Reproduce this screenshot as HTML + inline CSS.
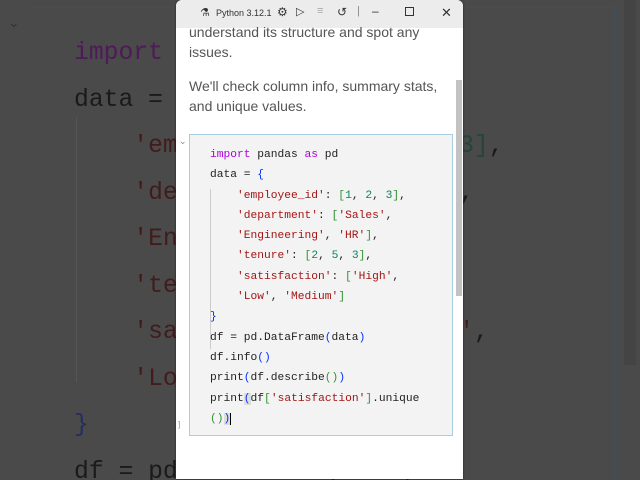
<!DOCTYPE html>
<html style="width:640px;height:480px;overflow:hidden"><head><meta charset="utf-8"><style>
*{margin:0;padding:0;box-sizing:border-box}
body{width:640px;height:480px;overflow:hidden;background:#4a4a4a;position:relative;font-family:"Liberation Sans",sans-serif}
.bg{position:absolute;left:29px;top:7px;width:586px;height:473px;border:1px solid #3f4f5c;border-bottom:none}
.bgc{position:absolute;left:74px;top:30px;font-family:"Liberation Mono",monospace;font-size:24.7px;line-height:46.5px;color:#1a1a1a;white-space:pre}
.bgsb{position:absolute;left:624px;top:0;width:12px;height:365px;background:#444}
.k{color:#af00db}.s{color:#a31515}.n{color:#098658}.b{color:#0431fa}.g{color:#319331}
.bgc span.dk{color:#4e1a57}.bgc span.ds{color:#421c1c}.bgc span.dn{color:#27443a}.bgc span.db{color:#222d63}
.win{position:absolute;left:176px;top:0;width:287px;height:479px;background:#fff;border-radius:6px 6px 0 0;overflow:hidden;box-shadow:0 0 2px #222}
.tb{height:28px;background:#ececec;position:relative;font-size:9px;color:#333}
.tb span{position:absolute;top:8px}
.txt{position:absolute;left:13px;font-size:14px;line-height:19.5px;color:#555}
.sb{position:absolute;left:280px;top:80px;width:6px;height:216px;background:#c2c2c2}
.code{position:absolute;left:13px;top:134px;width:264px;height:302px;background:#f3f3f3;border:1px solid #a9cce3}
.cl{position:absolute;left:20px;top:10px;font-family:"Liberation Mono",monospace;font-size:11.25px;line-height:20.3px;color:#222;white-space:pre}
.guide{position:absolute;left:20px;top:54px;width:1px;height:160px;background:#ccc}
</style></head><body>
<div class="bg"></div>
<div style="position:absolute;left:8px;top:14px;color:#333;font-size:14px">&#x2304;</div>
<div style="position:absolute;left:76px;top:117px;width:1px;height:265px;background:#555"></div>
<div class="bgc"><span class="dk">import</span> pandas
data = <span class="db">{</span>
    <span class="ds">'employee_id'</span>: <span class="dn">[1, 2, 3]</span>,
    <span class="ds">'department'</span>: <span class="dn">[</span><span class="ds">'Sales'</span>,
    <span class="ds">'Engineering'</span>, <span class="ds">'HR'</span><span class="dn">]</span>,
    <span class="ds">'tenure'</span>: <span class="dn">[2, 5, 3]</span>,
    <span class="ds">'satisfaction'</span>: <span class="dn">[</span><span class="ds">'High'</span>,
    <span class="ds">'Low'</span>, <span class="ds">'Medium'</span><span class="dn">]</span>
<span class="db">}</span>
df = pd.DataFrame(data)</div>
<div class="bgsb"></div>
<div class="win">
 <div class="tb">
  <span style="left:24px;top:6px;font-size:11px">&#x2697;</span>
  <span style="left:40px">Python 3.12.1</span>
  <span style="left:101px;top:5px;font-size:12px">&#x2699;</span>
  <span style="left:120px;top:5px;font-size:11px">&#x25B7;</span>
  <span style="left:141px;top:5px;font-size:11px;color:#aaa">&#x2261;</span>
  <span style="left:161px;top:5px;font-size:12px">&#x21BA;</span>
  <span style="left:181px;top:5px;font-size:11px;color:#888">|</span>
  <span style="left:196px;top:4px;font-size:12px">&#x2013;</span>
  <span style="left:229px;top:7px;width:9px;height:9px;border:1px solid #333"></span>
  <span style="left:265px;top:5px;font-size:13px">&#x2715;</span>
 </div>
 <div class="txt" style="top:23px">understand its structure and spot any<br>issues.</div>
 <div class="txt" style="top:77px">We'll check column info, summary stats,<br>and unique values.</div>
 <div class="sb"></div>
 <div style="position:absolute;left:3px;top:136px;font-size:9px;color:#888">&#x2304;</div>
 <div style="position:absolute;left:2px;top:420px;font-size:8px;color:#888">]</div>
 <div class="code">
  <div class="guide"></div>
  <div class="cl"><span class="k">import</span> pandas <span class="k">as</span> pd
data = <span class="b">{</span>
    <span class="s">'employee_id'</span>: <span class="g">[</span><span class="n">1</span>, <span class="n">2</span>, <span class="n">3</span><span class="g">]</span>,
    <span class="s">'department'</span>: <span class="g">[</span><span class="s">'Sales'</span>,
    <span class="s">'Engineering'</span>, <span class="s">'HR'</span><span class="g">]</span>,
    <span class="s">'tenure'</span>: <span class="g">[</span><span class="n">2</span>, <span class="n">5</span>, <span class="n">3</span><span class="g">]</span>,
    <span class="s">'satisfaction'</span>: <span class="g">[</span><span class="s">'High'</span>,
    <span class="s">'Low'</span>, <span class="s">'Medium'</span><span class="g">]</span>
<span class="b">}</span>
df = pd.DataFrame<span class="b">(</span>data<span class="b">)</span>
df.info<span class="b">()</span>
print<span class="b">(</span>df.describe<span class="g">()</span><span class="b">)</span>
print<span class="b" style="background:#ddd">(</span>df<span class="g">[</span><span class="s">'satisfaction'</span><span class="g">]</span>.unique
<span class="g">()</span><span class="b" style="background:#ddd;border-right:1.5px solid #000">)</span></div>
 </div>
</div>
</body></html>
